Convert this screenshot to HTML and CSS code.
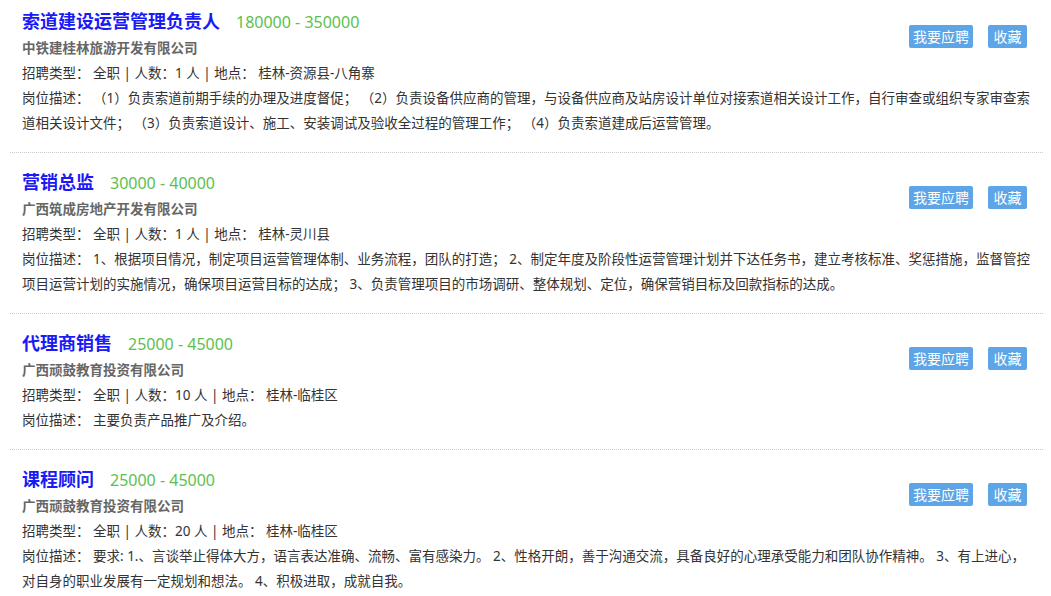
FILE: index.html
```html
<!DOCTYPE html>
<html lang="zh-CN">
<head>
<meta charset="utf-8">
<link rel="stylesheet" href="styles.css">
</head>
<body>
<div class="list">
  <div class="job">
    <div class="head">
      <div class="main">
        <div class="title"><span class="name">索道建设运营管理负责人</span><span class="salary">180000 - 350000</span></div>
        <div class="company">中铁建桂林旅游开发有限公司</div>
        <div class="info">招聘类型： 全职 | 人数：1 人 | 地点： 桂林-资源县-八角寨</div>
      </div>
      <div class="actions"><span class="btn">我要应聘</span><span class="btn fav">收藏</span></div>
    </div>
    <div class="desc">岗位描述： （1）负责索道前期手续的办理及进度督促； （2）负责设备供应商的管理，与设备供应商及站房设计单位对接索道相关设计工作，自行审查或组织专家审查索道相关设计文件； （3）负责索道设计、施工、安装调试及验收全过程的管理工作； （4）负责索道建成后运营管理。</div>
  </div>
  <div class="job">
    <div class="head">
      <div class="main">
        <div class="title"><span class="name">营销总监</span><span class="salary">30000 - 40000</span></div>
        <div class="company">广西筑成房地产开发有限公司</div>
        <div class="info">招聘类型： 全职 | 人数：1 人 | 地点： 桂林-灵川县</div>
      </div>
      <div class="actions"><span class="btn">我要应聘</span><span class="btn fav">收藏</span></div>
    </div>
    <div class="desc">岗位描述： 1、根据项目情况，制定项目运营管理体制、业务流程，团队的打造； 2、制定年度及阶段性运营管理计划并下达任务书，建立考核标准、奖惩措施，监督管控项目运营计划的实施情况，确保项目运营目标的达成； 3、负责管理项目的市场调研、整体规划、定位，确保营销目标及回款指标的达成。</div>
  </div>
  <div class="job">
    <div class="head">
      <div class="main">
        <div class="title"><span class="name">代理商销售</span><span class="salary">25000 - 45000</span></div>
        <div class="company">广西顽鼓教育投资有限公司</div>
        <div class="info">招聘类型： 全职 | 人数：10 人 | 地点： 桂林-临桂区</div>
      </div>
      <div class="actions"><span class="btn">我要应聘</span><span class="btn fav">收藏</span></div>
    </div>
    <div class="desc">岗位描述： 主要负责产品推广及介绍。</div>
  </div>
  <div class="job">
    <div class="head">
      <div class="main">
        <div class="title"><span class="name">课程顾问</span><span class="salary">25000 - 45000</span></div>
        <div class="company">广西顽鼓教育投资有限公司</div>
        <div class="info">招聘类型： 全职 | 人数：20 人 | 地点： 桂林-临桂区</div>
      </div>
      <div class="actions"><span class="btn">我要应聘</span><span class="btn fav">收藏</span></div>
    </div>
    <div class="desc">岗位描述： 要求: 1.、言谈举止得体大方，语言表达准确、流畅、富有感染力。 2、性格开朗，善于沟通交流，具备良好的心理承受能力和团队协作精神。 3、有上进心，对自身的职业发展有一定规划和想法。 4、积极进取，成就自我。</div>
  </div>
</div>
</body>
</html>
```

FILE: styles.css
```css
html, body {
  margin: 0;
  padding: 0;
  background: #fff;
}
body {
  font-family: "Noto Sans", "Noto Sans CJK SC", sans-serif;
  color: #333;
  font-size: 13.5px;
  text-spacing-trim: space-all;
}
.list {
  margin: 0 8px 0 10px;
}
.job {
  padding: 18px 10px 16px 12px;
  border-bottom: 1px dotted #c8c8c8;
}
.job:first-child {
  padding-top: 10px;
}
.head {
  display: flex;
  justify-content: space-between;
  align-items: flex-start;
}
.title {
  line-height: 23px;
  height: 23px;
  padding-bottom: 3px;
}
.name {
  font-size: 18px;
  font-weight: bold;
  color: #1a1af5;
}
.salary {
  font-size: 16px;
  color: #5cbf4f;
  margin-left: 16px;
}
.company {
  line-height: 25px;
  font-weight: bold;
  color: #666;
}
.info {
  line-height: 25px;
}
.desc {
  line-height: 25px;
}
.actions {
  display: flex;
  gap: 15px;
  padding-top: 15px;
  padding-right: 6px;
}
.btn {
  display: inline-block;
  background: #5da5e6;
  color: #fff;
  font-family: "Noto Sans CJK SC", sans-serif;
  font-size: 14px;
  height: 23px;
  line-height: 23px;
  padding: 0 4px;
  border-radius: 2px;
}
.btn.fav {
  padding: 0 5.5px;
}
```
